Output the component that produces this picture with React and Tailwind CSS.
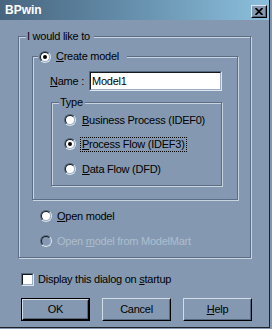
import React from 'react';

const etched = 'border border-[#5b6e86] shadow-[inset_1px_1px_0_#c8d4e0,1px_1px_0_#c8d4e0]';

function Radio({ checked, disabled }) {
  return (
    <span className="flex h-[12px] w-[12px] shrink-0 items-center justify-center rounded-full border border-t-[#56687e] border-l-[#56687e] border-r-[#dde6ee] border-b-[#dde6ee]">
      <span
        className={`flex h-[10px] w-[10px] items-center justify-center rounded-full border border-t-[#141920] border-l-[#141920] border-r-[#9aadc2] border-b-[#9aadc2] ${
          disabled ? 'bg-[#8499b1]' : 'bg-white'
        }`}
      >
        {checked && <span className="h-[4px] w-[4px] rounded-full bg-black" />}
      </span>
    </span>
  );
}

function Checkbox() {
  return (
    <span className="flex h-[13px] w-[13px] shrink-0 border border-t-[#56687e] border-l-[#56687e] border-r-[#dde6ee] border-b-[#dde6ee]">
      <span className="h-full w-full border border-t-[#141920] border-l-[#141920] border-r-[#9aadc2] border-b-[#9aadc2] bg-white" />
    </span>
  );
}

function Button({ children, isDefault }) {
  return (
    <div className={`h-[23px] w-[69px] ${isDefault ? 'border border-black' : ''}`}>
      <div className="h-full w-full border border-t-[#d2dde8] border-l-[#d2dde8] border-r-black border-b-black">
        <div className="flex h-full w-full items-center justify-center border border-t-transparent border-l-transparent border-r-[#56687e] border-b-[#56687e]">
          {children}
        </div>
      </div>
    </div>
  );
}

function Option({ label, checked, focused }) {
  return (
    <div className="flex h-[14px] items-center gap-[4px]">
      <Radio checked={checked} />
      <span className={`border px-[1px] leading-[13px] ${focused ? 'border-dotted border-black' : 'border-transparent'}`}>
        {label}
      </span>
    </div>
  );
}

export default function App() {
  return (
    <div className="h-[329px] w-[272px] bg-[#8499b1] text-[11px] leading-[13px] tracking-[-0.25px] text-black [font-family:'Liberation_Sans',Arial,sans-serif]">
      <div className="flex h-[328px] w-[270px] flex-col border-r border-b border-[#1c2128]">
        {/* title bar */}
        <div className="flex h-[20px] w-full items-start justify-between bg-linear-to-r from-[#48657f] via-[#6690ad] to-[#8cc0dc] pl-[5px] pr-[2px]">
          <span className="mt-[3px] text-[12px] font-bold leading-[14px] tracking-normal text-white">BPwin</span>
          <div className="mt-[5px] h-[13px] w-[16px] border border-t-[#dde6ee] border-l-[#dde6ee] border-r-black border-b-black bg-[#8499b1]">
            <div className="flex h-full w-full items-center justify-center border border-t-transparent border-l-transparent border-r-[#56687e] border-b-[#56687e]">
              <svg width="8" height="7" viewBox="0 0 8 7">
                <path d="M0.5 0 L7.5 7 M7.5 0 L0.5 7" stroke="black" strokeWidth="1.8" />
              </svg>
            </div>
          </div>
        </div>

        {/* I would like to */}
        <div className={`ml-[18px] mt-[16px] h-[222px] w-[233px] ${etched}`}>
          <div className="-mt-[7px] ml-[7px] w-fit bg-[#8499b1] pl-[1px] pr-[4px]">I would like to</div>

          {/* Create model */}
          <div className={`ml-[13px] mt-[13px] h-[144px] w-[206px] ${etched}`}>
            <div className="-mt-[7px] ml-[5px] flex h-[13px] w-fit items-center gap-[5px] bg-[#8499b1] pl-[1px] pr-[8px]">
              <Radio checked />
              <span>
                <u>C</u>reate model
              </span>
            </div>

            <div className="ml-[17px] mt-[8px] flex items-center">
              <span className="w-[39px]">
                <u>N</u>ame :
              </span>
              <div className="h-[20px] w-[133px] border border-t-[#56687e] border-l-[#56687e] border-r-[#dde6ee] border-b-[#dde6ee]">
                <div className="flex h-full w-full items-center border border-t-[#141920] border-l-[#141920] border-r-[#9aadc2] border-b-[#9aadc2] bg-white pl-[1px]">
                  Model1
                </div>
              </div>
            </div>

            {/* Type */}
            <div className={`ml-[18px] mt-[11px] h-[84px] w-[171px] ${etched}`}>
              <div className="-mt-[7px] ml-[7px] w-fit bg-[#8499b1] pl-[1px] pr-[2px]">Type</div>
              <div className="ml-[12px] mt-[4px] flex flex-col">
                <Option
                  label={
                    <>
                      <u>B</u>usiness Process (IDEF0)
                    </>
                  }
                />
                <div className="mt-[10px]">
                  <Option
                    checked
                    focused
                    label={
                      <>
                        <u>P</u>rocess Flow (IDEF3)
                      </>
                    }
                  />
                </div>
                <div className="mt-[11px]">
                  <Option
                    label={
                      <>
                        <u>D</u>ata Flow (DFD)
                      </>
                    }
                  />
                </div>
              </div>
            </div>
          </div>

          <div className="ml-[21px] mt-[9px] flex h-[14px] items-center gap-[5px]">
            <Radio />
            <span>
              <u>O</u>pen model
            </span>
          </div>
          <div className="ml-[21px] mt-[11px] flex h-[14px] items-center gap-[5px] text-[#aebdce]">
            <Radio disabled />
            <span>
              Open <u>m</u>odel from ModelMart
            </span>
          </div>
        </div>

        <div className="ml-[21px] mt-[14px] flex h-[14px] items-center gap-[4px]">
          <Checkbox />
          <span>
            Display this dialog on <u>s</u>tartup
          </span>
        </div>

        <div className="ml-[21px] mt-[12px] flex gap-[12px]">
          <Button isDefault>OK</Button>
          <Button>Cancel</Button>
          <Button>
            <span>
              <u>H</u>elp
            </span>
          </Button>
        </div>
      </div>
    </div>
  );
}
